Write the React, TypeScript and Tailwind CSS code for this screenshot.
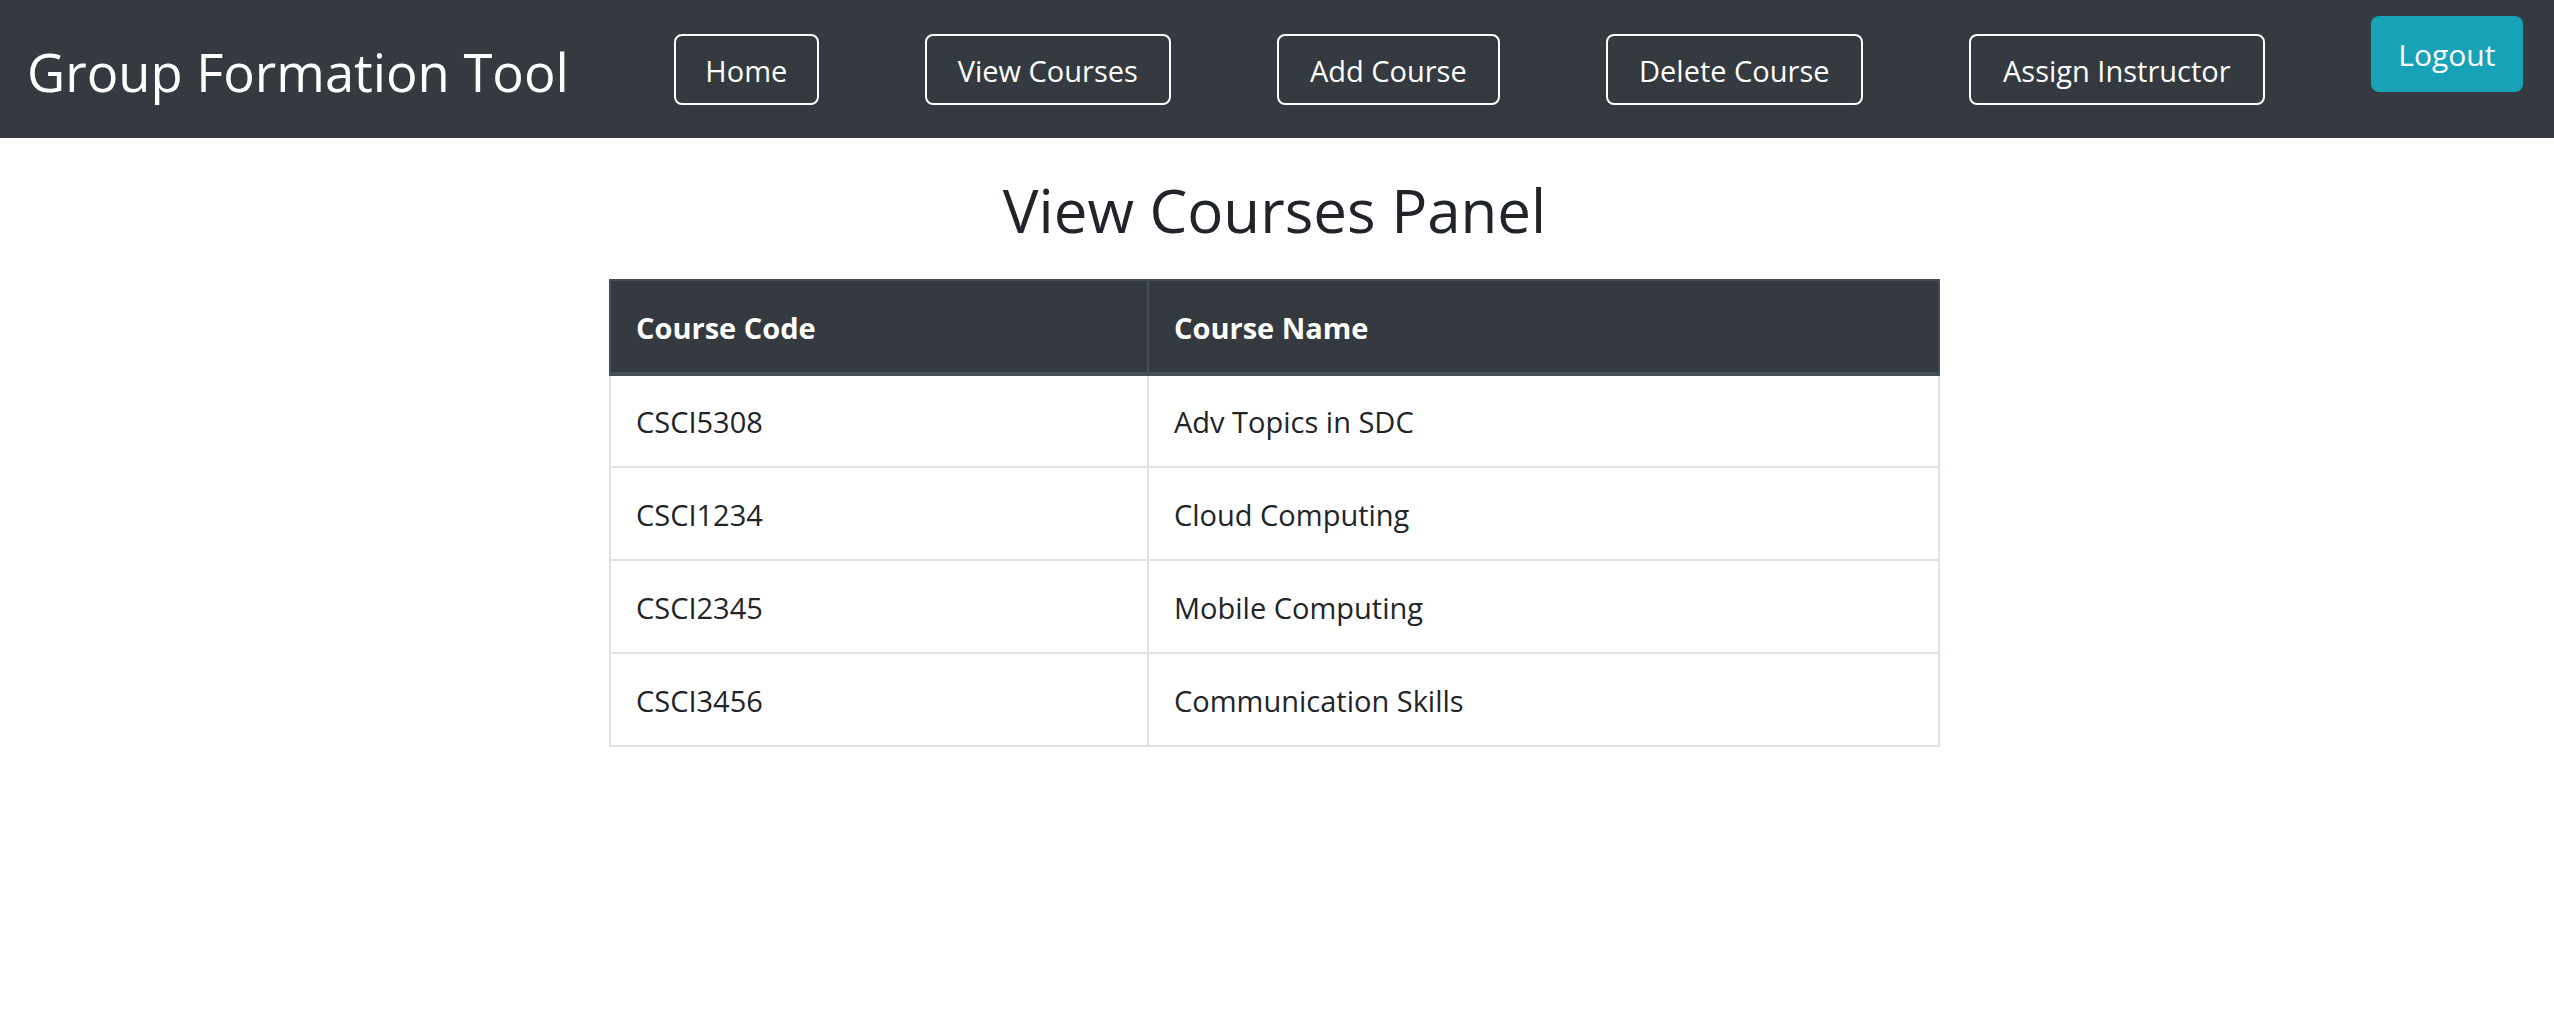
const navItems = ["Home", "View Courses", "Add Course", "Delete Course", "Assign Instructor"];
const navWidths = ["w-[145px]", "w-[246px]", "w-[223px]", "w-[257px]", "w-[296px]"];

const courses = [
  { code: "CSCI5308", name: "Adv Topics in SDC" },
  { code: "CSCI1234", name: "Cloud Computing" },
  { code: "CSCI2345", name: "Mobile Computing" },
  { code: "CSCI3456", name: "Communication Skills" },
];

const App = () => {
  return (
    <div className="min-h-screen bg-white text-[#212529] font-['Open_Sans',sans-serif]">
      <nav className="flex h-[138px] items-center bg-[#343a40] pl-[27px]">
        <div className="pt-[6px] text-[52.5px] leading-none text-white">Group Formation Tool</div>
        <div className="ml-[105px] flex gap-[106px]">
          {navItems.map((item, i) => (
            <button
              key={item}
              className={`${navWidths[i]} h-[71px] rounded-[8px] border-2 border-white pt-[4px] text-[29px] text-white`}
            >
              {item}
            </button>
          ))}
          <button className="-mt-[18px] h-[76px] w-[152px] self-start rounded-[8px] bg-[#17a2b8] pt-[2px] text-[30px] text-white">
            Logout
          </button>
        </div>
      </nav>

      <div className="flex flex-col items-center pr-[5px]">
        <h1 className="mt-[36px] text-[60px] leading-[1.2] font-normal">View Courses Panel</h1>
        <table className="mt-[33px] w-[1331px] border-collapse text-[29px]">
          <thead>
            <tr className="h-[94px] bg-[#343a40] text-left text-white">
              <th className="w-[538px] border-2 border-b-4 border-[#454d55] pl-[25px] pt-[2px] font-bold">Course Code</th>
              <th className="border-2 border-b-4 border-[#454d55] pl-[25px] pt-[2px] font-bold">Course Name</th>
            </tr>
          </thead>
          <tbody>
            {courses.map((c) => (
              <tr key={c.code} className="h-[93px]">
                <td className="border-2 border-[#dee2e6] pl-[25px] pt-[2px]">{c.code}</td>
                <td className="border-2 border-[#dee2e6] pl-[25px] pt-[2px]">{c.name}</td>
              </tr>
            ))}
          </tbody>
        </table>
      </div>
    </div>
  );
};

export default App;
